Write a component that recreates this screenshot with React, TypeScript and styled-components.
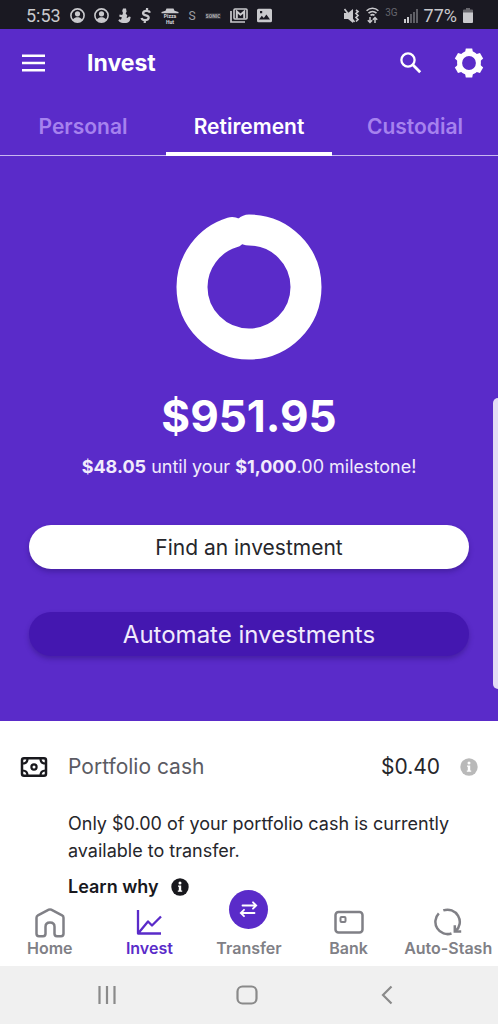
import React from "react";
import styled, { createGlobalStyle, css } from "styled-components";

const color = {
  purple: "#5a2bc9",
  deep: "#4417b0",
  lilac: "#a682ee",
  ink: "#26262b",
  grey: "#808086",
  status: "#1a1922",
  statusText: "#c9c9cd",
};

const GlobalStyle = createGlobalStyle`
  *, *::before, *::after { box-sizing: border-box; }
  body {
    margin: 0;
    background: #fff;
    color: ${color.ink};
    font-family: Inter, "Liberation Sans", sans-serif;
  }
  button { font: inherit; color: inherit; border: 0; background: none; padding: 0; cursor: pointer; }
  svg { display: block; flex: none; }
`;

const Screen = styled.div`
  display: flex;
  flex-direction: column;
  min-height: 100vh;
`;

const StatusBar = styled.div`
  display: flex;
  justify-content: space-between;
  align-items: center;
  height: 29px;
  padding: 2px 25px 0 26px;
  background: ${color.status};
  color: ${color.statusText};
  font-family: Roboto, sans-serif;
  font-size: 18px;
  line-height: 20px;
`;

const StatusGroup = styled.div<{ $gap: number }>`
  display: flex;
  align-items: center;
  gap: ${(p) => p.$gap}px;
`;

const NetworkLabel = styled.span`
  font-size: 10px;
  line-height: 14px;
  height: 20px;
  color: #66666e;
`;

const Header = styled.header`
  display: flex;
  align-items: center;
  height: 67px;
  padding: 0 14px 0 22px;
  background: ${color.purple};
  color: #fff;
`;

const Title = styled.h1`
  flex: 1;
  margin: 0 0 0 41px;
  font-size: 23px;
  line-height: 28px;
  font-weight: 700;
`;

const HeaderActions = styled.div`
  display: flex;
  align-items: center;
  gap: 32px;
`;

const Tabs = styled.div`
  display: flex;
  height: 60px;
  background: ${color.purple};
  border-bottom: 1px solid #c8b7f0;
`;

const Tab = styled.button<{ $active?: boolean }>`
  flex: 1;
  height: 60px;
  padding-top: 6px;
  border-bottom: 4px solid transparent;
  font-size: 21px;
  line-height: 28px;
  font-weight: 600;
  color: ${color.lilac};
  ${(p) =>
    p.$active &&
    css`
      color: #fff;
      border-bottom-color: #fff;
    `}
`;

const Hero = styled.section`
  position: relative;
  display: flex;
  flex-direction: column;
  align-items: center;
  padding: 58px 29px 65px;
  background: ${color.purple};
  color: #fff;
`;

const Balance = styled.p`
  margin: 28px 0 11px;
  font-size: 44px;
  line-height: 56px;
  font-weight: 700;
`;

const Milestone = styled.p`
  margin: 0 0 46px;
  font-size: 18px;
  line-height: 24px;
  color: #f1ebfc;
  b { font-weight: 700; }
`;

const HeroActions = styled.div`
  display: flex;
  flex-direction: column;
  gap: 43px;
  align-self: stretch;
`;

const PillButton = styled.button<{ $primary?: boolean }>`
  height: 44px;
  padding-top: 2px;
  border-radius: 22px;
  font-size: ${(p) => (p.$primary ? 21 : 24)}px;
  line-height: 30px;
  background: ${(p) => (p.$primary ? "#fff" : color.deep)};
  color: ${(p) => (p.$primary ? color.ink : "#f1ebfc")};
  box-shadow: 0 3px 5px rgba(40, 15, 110, 0.4);
`;

const EdgeHandle = styled.div`
  position: absolute;
  top: 242px;
  right: 0;
  width: 5px;
  height: 291px;
  border-radius: 5px 0 0 5px;
  background: #e4dcf5;
`;

const CashSection = styled.section`
  flex: 1;
  padding: 28px 20px 1px;
`;

const CashRow = styled.div`
  display: flex;
  align-items: center;
  height: 35px;
  font-size: 21px;
  line-height: 28px;
`;

const CashLabel = styled.span`
  flex: 1;
  margin-left: 20px;
  color: #5b5b63;
`;

const InfoButton = styled.button`
  margin-left: 20px;
`;

const CashDetail = styled.div`
  padding-left: 48px;
  font-size: 18px;
`;

const CashNote = styled.p`
  margin: 26px 0 11px;
  line-height: 27px;
`;

const LearnLink = styled.a`
  display: inline-flex;
  align-items: center;
  gap: 12px;
  line-height: 24px;
  font-weight: 600;
  color: #18181d;
  text-decoration: none;
`;

const BottomNav = styled.nav`
  display: flex;
  height: 66px;
  padding-top: 8px;
  background: #fff;
`;

const NavItem = styled.a<{ $active?: boolean }>`
  flex: 1 1 0;
  min-width: 0;
  display: flex;
  flex-direction: column;
  align-items: center;
  font-size: 16px;
  line-height: 20px;
  font-weight: 600;
  white-space: nowrap;
  text-decoration: none;
  color: ${(p) => (p.$active ? color.purple : color.grey)};
`;

const TransferBadge = styled.span`
  display: flex;
  align-items: center;
  justify-content: center;
  width: 39px;
  height: 39px;
  margin: -18px 0 9px;
  border-radius: 50%;
  background: ${color.purple};
`;

const SystemNav = styled.div`
  display: flex;
  justify-content: center;
  height: 58px;
  padding-right: 4px;
  background: #f0f0f0;
`;

const SystemButton = styled.button`
  display: flex;
  align-items: center;
  justify-content: center;
  width: 140px;
`;

const PersonIcon = () => (
  <svg width="15" height="15" viewBox="0 0 15 15">
    <circle cx="7.5" cy="7.5" r="6.6" fill="none" stroke="currentColor" strokeWidth="1.6" />
    <circle cx="7.5" cy="5.8" r="2.6" fill="currentColor" />
    <path d="M2.8 11.6C4.2 9.6 5.8 9.2 7.5 9.2s3.3.4 4.7 2.4A6 6 0 0 1 7.5 14a6 6 0 0 1-4.7-2.4z" fill="currentColor" />
  </svg>
);

const FigureIcon = () => (
  <svg width="13" height="15" viewBox="0 0 13 15" fill="currentColor">
    <path d="M5 .5h3l.6 3.2-1 1.6 1.7 2.2L8.5 9.4l1 .6 1.5-1.5 1.7.4-.8 3.6c-1 1.8-2.8 2.6-5.2 2.6-3 0-5.200-.8-6.400-2.600l1-1.300 1.600.6L4 9.600 1.200 8.600l.4-2.200 2.600.600L5 5 4.200 3z" />
  </svg>
);

const DollarIcon = () => (
  <svg width="12" height="15" viewBox="0 0 12 15" fill="none" stroke="currentColor" strokeWidth="2.3">
    <path d="M10 4.6C9.4 3.2 8 2.8 6.6 2.8 4.6 2.8 3.3 3.7 3.1 5c-.5 3.2 6 1.7 5.5 5-.3 1.5-1.8 2.1-3.6 2.1-1.7 0-3-.6-3.5-2.1M7.2 0l-.5 3M5.1 12l-.5 3" />
  </svg>
);

const HutIcon = () => (
  <svg width="18" height="16" viewBox="0 0 18 16" fill="currentColor">
    <path d="M5.5.5h7l1 2.200 4 1.200v1.300H.5V3.900l4-1.200z" />
    <text x="9" y="9.500" textAnchor="middle" fontSize="5" fontWeight="900">Pizza</text>
    <text x="9" y="15.500" textAnchor="middle" fontSize="5" fontWeight="900">Hut</text>
  </svg>
);

const LetterIcon = () => (
  <svg width="8" height="15" viewBox="0 0 8 15" fill="currentColor" opacity="0.75">
    <text x="4" y="12" textAnchor="middle" fontSize="12">S</text>
  </svg>
);

const SonicIcon = () => (
  <svg width="16" height="15" viewBox="0 0 16 15">
    <path d="M0 5h16l-2 3 2 3H0l2-3z" fill="#33333b" />
    <text x="8" y="10" textAnchor="middle" fontSize="5" fontWeight="900" fill="#a5a5aa">SONIC</text>
  </svg>
);

const MailStackIcon = () => (
  <svg width="18" height="15" viewBox="0 0 18 15" fill="none" stroke="currentColor">
    <path d="M1 3v11h14" strokeWidth="1.7" />
    <rect x="4" y="1" width="13" height="10" rx="1" strokeWidth="1.6" />
    <path d="M6.8 10.5V3.5l3.7 3.2 3.7-3.2v7" strokeWidth="2" />
  </svg>
);

const PictureIcon = () => (
  <svg width="15" height="15" viewBox="0 0 15 15">
    <path
      fill="currentColor"
      fillRule="evenodd"
      d="M1.5.8h12a1.5 1.5 0 0 1 1.5 1.5v10.4a1.5 1.5 0 0 1-1.5 1.5h-12A1.5 1.5 0 0 1 0 12.700V2.300A1.5 1.5 0 0 1 1.5.8zM2 11.500h11L9.400 6.600 6.800 10 4.800 7.800zM3 3v2.200h2.200V3z"
    />
  </svg>
);

const MuteIcon = () => (
  <svg width="16" height="16" viewBox="0 0 16 16">
    <path d="M0 5h4l5-4v14l-5-4H0z" fill="currentColor" />
    <path d="M.5 1l10 13" stroke="currentColor" strokeWidth="1.6" />
    <path d="M12 2l2 1.5-2 2 2 2-2 2 2 2-2 2" fill="none" stroke="currentColor" strokeWidth="1.7" />
  </svg>
);

const WifiIcon = () => (
  <svg width="13" height="17" viewBox="0 0 13 17" fill="none" stroke="currentColor" strokeWidth="1.6">
    <path d="M.6 3.8c3.4-3.4 8.4-3.4 11.8 0M2.5 6.2c2.3-2.2 5.7-2.2 8 0M4.5 8.4c1.2-1 2.8-1 4 0" />
    <path d="M4 10v5.5M1.8 13.3l2.2 2.2 2.2-2.2M9 16v-5.5M6.8 12.7L9 10.5l2.2 2.2" strokeWidth="1.5" />
  </svg>
);

const SignalIcon = () => (
  <svg width="14" height="14" viewBox="0 0 14 14" fill="currentColor">
    <rect x="0" y="10" width="2" height="4" />
    <rect x="3" y="8" width="2" height="6" />
    <rect x="6" y="5" width="2" height="9" opacity="0.4" />
    <rect x="9" y="3" width="2" height="11" opacity="0.4" />
    <rect x="12" y="0" width="2" height="14" opacity="0.4" />
  </svg>
);

const BatteryIcon = () => (
  <svg width="10" height="15" viewBox="0 0 10 15" fill="currentColor">
    <path d="M3 0h4v1.5h2a1 1 0 0 1 1 1V5H0V2.5a1 1 0 0 1 1-1h2z" opacity="0.45" />
    <path d="M0 4.5h10V14a1 1 0 0 1-1 1H1a1 1 0 0 1-1-1z" />
  </svg>
);

const MenuIcon = () => (
  <svg width="24" height="18" viewBox="0 0 24 18" stroke="#fff" strokeWidth="2.4">
    <path d="M0 1.8h23M0 9h23M0 16.2h23" />
  </svg>
);

const SearchIcon = () => (
  <svg width="22" height="22" viewBox="0 0 22 22" fill="none" stroke="#fff">
    <circle cx="8" cy="8" r="6.6" strokeWidth="2.3" />
    <path d="M12.8 12.8l7.4 7.4" strokeWidth="2.8" />
  </svg>
);

const GearIcon = () => (
  <svg width="30" height="30" viewBox="0 0 30 30">
    <circle cx="15" cy="15" r="9.4" fill="none" stroke="#fff" strokeWidth="5" />
    {[0, 60, 120, 180, 240, 300].map((angle) => (
      <path key={angle} d="M11.8.5h6.4l1 5h-8.4z" fill="#fff" transform={`rotate(${angle} 15 15)`} />
    ))}
  </svg>
);

const ProgressRing = ({ percent }: { percent: number }) => (
  <svg width="146" height="146" viewBox="0 0 146 146" role="img" aria-label={`${percent}% of milestone`}>
    <circle
      cx="73"
      cy="73"
      r="57"
      fill="none"
      stroke="#fff"
      strokeWidth="31"
      strokeLinecap="round"
      pathLength={100}
      strokeDasharray={`${percent} 100`}
      transform="rotate(-90 73 73)"
    />
  </svg>
);

const CashIcon = () => (
  <svg width="28" height="20" viewBox="0 0 28 20" fill="none" stroke="#18181d" strokeWidth="2.2">
    <rect x="2" y="1.3" width="24" height="17.4" rx="2" strokeWidth="2.5" />
    <circle cx="14" cy="10" r="2.6" />
    <path d="M7.5 1.5c0 3-2 5-5 5M20.5 1.5c0 3 2 5 5 5M7.5 18.5c0-3-2-5-5-5M20.5 18.5c0-3 2-5 5-5" />
  </svg>
);

const InfoIcon = ({ fill }: { fill: string }) => (
  <svg width="18" height="18" viewBox="0 0 18 18">
    <circle cx="9" cy="9" r="8.7" fill={fill} />
    <circle cx="9" cy="5" r="1.5" fill="#fff" />
    <path d="M7 7.6h3.2v5H11.2v1.2H6.8v-1.2H7.8V8.8H7z" fill="#fff" />
  </svg>
);

const navIcon = {
  width: 30,
  height: 30,
  viewBox: "0 0 30 30",
  fill: "none",
  stroke: "currentColor",
  strokeWidth: 2.5,
  strokeLinejoin: "round" as const,
};

const HomeIcon = () => (
  <svg {...navIcon}>
    <path d="M2.9 7.4L13.8 1.7c.8-.4 1.6-.4 2.4 0L27.1 7.4c1 .5 1.4 1.2 1.4 2.3V25.8c0 1.6-.8 2.4-2.4 2.4h-4.2c-1.6 0-2.4-.8-2.4-2.4v-7c0-2.8-1.8-4.3-4.5-4.3s-4.5 1.5-4.5 4.3v7c0 1.6-.8 2.4-2.4 2.4H3.9c-1.6 0-2.4-.8-2.4-2.4V9.7c0-1.1.4-1.8 1.4-2.3z" />
  </svg>
);

const ChartIcon = () => (
  <svg {...navIcon} strokeWidth={2.3}>
    <path d="M4 2v23.5h23M4.5 25L14 13.5l4 4L27 8.5" />
  </svg>
);

const SwapIcon = () => (
  <svg width="19" height="19" viewBox="0 0 19 19" fill="none" stroke="#fff" strokeWidth="1.8" strokeLinecap="round">
    <path d="M3.5 5.5h13.5M14 2.3l3.2 3.2L14 8.7M15.5 13H2M5 9.8L1.8 13 5 16.2" />
  </svg>
);

const CardIcon = () => (
  <svg {...navIcon}>
    <rect x="1.5" y="4" width="27" height="20.5" rx="3" />
    <rect x="6.5" y="9" width="5" height="5" rx="1" strokeWidth="2" />
  </svg>
);

const RefreshIcon = () => (
  <svg {...navIcon}>
    <path d="M10.3 2.4A12.3 12.3 0 0 1 22.5 23.3M18.5 25.5A12.3 12.3 0 0 1 5.8 5.3" />
    <path d="M21.8 17.3v6.3h6.4" strokeLinejoin="miter" />
  </svg>
);

const navItems = [
  { label: "Home", icon: <HomeIcon /> },
  { label: "Invest", icon: <ChartIcon />, active: true },
  { label: "Transfer", icon: <TransferBadge><SwapIcon /></TransferBadge> },
  { label: "Bank", icon: <CardIcon /> },
  { label: "Auto-Stash", icon: <RefreshIcon /> },
];

export default function App() {
  return (
    <Screen>
      <GlobalStyle />
      <StatusBar>
        <StatusGroup $gap={9}>
          <span>5:53</span>
          <PersonIcon />
          <PersonIcon />
          <FigureIcon />
          <DollarIcon />
          <HutIcon />
          <LetterIcon />
          <SonicIcon />
          <MailStackIcon />
          <PictureIcon />
        </StatusGroup>
        <StatusGroup $gap={6}>
          <MuteIcon />
          <WifiIcon />
          <NetworkLabel>3G</NetworkLabel>
          <SignalIcon />
          <span>77%</span>
          <BatteryIcon />
        </StatusGroup>
      </StatusBar>

      <Header>
        <button type="button" aria-label="Menu"><MenuIcon /></button>
        <Title>Invest</Title>
        <HeaderActions>
          <button type="button" aria-label="Search"><SearchIcon /></button>
          <button type="button" aria-label="Settings"><GearIcon /></button>
        </HeaderActions>
      </Header>

      <Tabs role="tablist">
        <Tab type="button" role="tab" aria-selected={false}>Personal</Tab>
        <Tab type="button" role="tab" aria-selected $active>Retirement</Tab>
        <Tab type="button" role="tab" aria-selected={false}>Custodial</Tab>
      </Tabs>

      <Hero>
        <ProgressRing percent={95.195} />
        <Balance>$951.95</Balance>
        <Milestone>
          <b>$48.05</b> until your <b>$1,000</b>.00 milestone!
        </Milestone>
        <HeroActions>
          <PillButton type="button" $primary>Find an investment</PillButton>
          <PillButton type="button">Automate investments</PillButton>
        </HeroActions>
        <EdgeHandle />
      </Hero>

      <CashSection>
        <CashRow>
          <CashIcon />
          <CashLabel>Portfolio cash</CashLabel>
          <span>$0.40</span>
          <InfoButton type="button" aria-label="About portfolio cash"><InfoIcon fill="#b9b9b9" /></InfoButton>
        </CashRow>
        <CashDetail>
          <CashNote>Only $0.00 of your portfolio cash is currently available to transfer.</CashNote>
          <LearnLink href="#learn-why">
            Learn why
            <InfoIcon fill="#18181d" />
          </LearnLink>
        </CashDetail>
      </CashSection>

      <BottomNav aria-label="Main">
        {navItems.map((item) => (
          <NavItem key={item.label} href={`#${item.label.toLowerCase()}`} $active={item.active}>
            {item.icon}
            {item.label}
          </NavItem>
        ))}
      </BottomNav>

      <SystemNav>
        <SystemButton type="button" aria-label="Recent apps">
          <svg width="20" height="20" viewBox="0 0 20 20" stroke="#8a8a8a" strokeWidth="2.2">
            <path d="M2.5 1v18M10 1v18M17.5 1v18" />
          </svg>
        </SystemButton>
        <SystemButton type="button" aria-label="Home screen">
          <svg width="22" height="20" viewBox="0 0 22 20" fill="none" stroke="#8a8a8a" strokeWidth="2.2">
            <rect x="1.5" y="1.5" width="19" height="17" rx="5" />
          </svg>
        </SystemButton>
        <SystemButton type="button" aria-label="Back">
          <svg width="12" height="20" viewBox="0 0 12 20" fill="none" stroke="#8a8a8a" strokeWidth="2.2">
            <path d="M10.5 1.5L2 10l8.5 8.5" />
          </svg>
        </SystemButton>
      </SystemNav>
    </Screen>
  );
}
